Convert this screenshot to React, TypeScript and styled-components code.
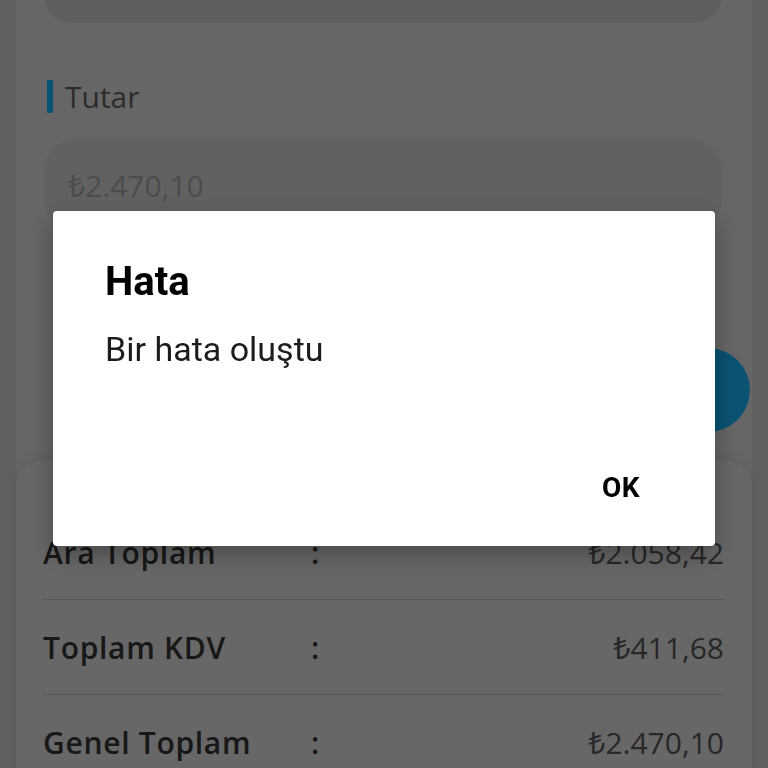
import React from "react";
import styled, { createGlobalStyle } from "styled-components";

const Global = createGlobalStyle`
  html, body { margin: 0; padding: 0; width: 768px; height: 768px; overflow: hidden; background: #c4c4c4; }
  * { box-sizing: border-box; }
`;

const Frame = styled.div`
  width: 768px;
  height: 768px;
  overflow: hidden;
  background: #c2c2c2;
  padding: 0 16px;
`;

const Panel = styled.div`
  height: 100%;
  background: #cccccc;
  display: flex;
  flex-direction: column;
  font-family: "Open Sans", "Noto Sans", sans-serif;
  & > * { flex-shrink: 0; }
`;

const TopCard = styled.div`
  height: 70px;
  margin: -47px 30px 0 28px;
  border-radius: 28px;
  background: #bfbfbf;
`;

const SectionLabel = styled.div`
  display: flex;
  align-items: center;
  gap: 12px;
  height: 33px;
  margin: 57px 0 0 31px;
  font-size: 30px;
  color: #585858;
`;

const Bar = styled.span`
  width: 6px;
  height: 33px;
  background: #14a8e6;
`;

const InputBox = styled.div`
  height: 90px;
  margin: 27px 30px 0 28px;
  border-radius: 30px;
  background: #c3c3c3;
  display: flex;
  align-items: center;
  padding-left: 24px;
  font-size: 30px;
  color: #989898;
`;

const FabRow = styled.div`
  display: flex;
  justify-content: flex-end;
  padding-right: 2px;
  margin-top: 118px;
`;

const Fab = styled.div`
  width: 84px;
  height: 84px;
  border-radius: 50%;
  background: #14a6e4;
`;

const SummaryCard = styled.div`
  margin-top: 28px;
  border-radius: 28px;
  background: #cecece;
  box-shadow: 0 0 14px rgba(0, 0, 0, 0.1);
  padding: 45px 28px 0 27px;
`;

const Row = styled.div<{ $last?: boolean }>`
  display: grid;
  grid-template-columns: 268px auto 1fr;
  align-items: center;
  height: 95px;
  border-bottom: ${(p) => (p.$last ? "none" : "1px solid #aeaeae")};
`;

const RowLabel = styled.span`
  font-size: 30px;
  font-weight: 600;
  letter-spacing: 0.7px;
  color: #303030;
  white-space: nowrap;
`;

const Colon = styled.span`
  font-size: 30px;
  font-weight: 600;
  color: #303030;
`;

const RowValue = styled.span`
  font-size: 30px;
  color: #505050;
  text-align: right;
  white-space: nowrap;
`;

const Overlay = styled.div`
  position: fixed;
  inset: 0;
  background: rgba(0, 0, 0, 0.5);
  display: flex;
  justify-content: center;
  align-items: flex-start;
  padding-top: 211px;
`;

const Dialog = styled.div`
  width: 662px;
  height: 335px;
  background: #ffffff;
  border-radius: 4px;
  box-shadow: 0 8px 24px rgba(0, 0, 0, 0.3);
  display: flex;
  flex-direction: column;
  padding: 47px 75px 40px 52px;
  font-family: Roboto, "Noto Sans", sans-serif;
`;

const Title = styled.div`
  font-size: 40px;
  line-height: 48px;
  font-weight: 700;
  color: #000;
`;

const Message = styled.div`
  margin-top: 21px;
  font-size: 34px;
  line-height: 44px;
  color: #1c1c1c;
`;

const Actions = styled.div`
  margin-top: auto;
  display: flex;
  justify-content: flex-end;
`;

const OkButton = styled.button`
  border: none;
  background: none;
  padding: 0;
  font-family: Roboto, "Noto Sans", sans-serif;
  font-size: 28px;
  line-height: 36px;
  font-weight: 700;
  letter-spacing: 0.5px;
  color: #000;
`;

const rows = [
  { label: "Ara Toplam", value: "₺2.058,42" },
  { label: "Toplam KDV", value: "₺411,68" },
  { label: "Genel Toplam", value: "₺2.470,10" },
];

export default function App() {
  return (
    <>
      <Global />
      <Frame>
        <Panel>
          <TopCard />
          <SectionLabel>
            <Bar />
            Tutar
          </SectionLabel>
          <InputBox>₺2.470,10</InputBox>
          <FabRow>
            <Fab />
          </FabRow>
          <SummaryCard>
            {rows.map((r, i) => (
              <Row key={r.label} $last={i === rows.length - 1}>
                <RowLabel>{r.label}</RowLabel>
                <Colon>:</Colon>
                <RowValue>{r.value}</RowValue>
              </Row>
            ))}
          </SummaryCard>
        </Panel>
      </Frame>
      <Overlay>
        <Dialog>
          <Title>Hata</Title>
          <Message>Bir hata oluştu</Message>
          <Actions>
            <OkButton>OK</OkButton>
          </Actions>
        </Dialog>
      </Overlay>
    </>
  );
}
